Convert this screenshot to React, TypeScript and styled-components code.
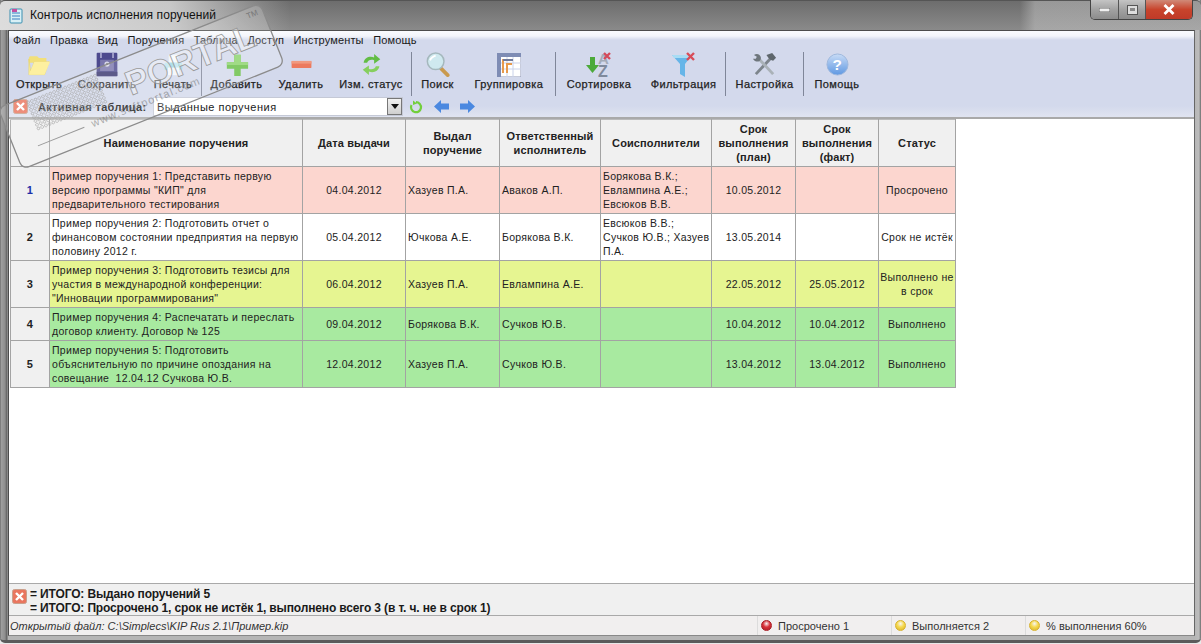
import React from "react";
import styled, { createGlobalStyle } from "styled-components";

const Global = createGlobalStyle`
  html, body { margin: 0; padding: 0; width: 1201px; height: 644px; overflow: hidden; background: #e8e8e8; }
  * { box-sizing: border-box; }
  body { font-family: "Liberation Sans", Arial, sans-serif; color: #1a1a1a; }
`;

const Win = styled.div`
  position: relative; width: 1201px; height: 643px; display: flex; flex-direction: column;
  background: linear-gradient(90deg, #5c5c5c 0, #a0a0a0 1px, #8e8e8e 5px, #5e5e5e 7px, #b5b5b5 8px, #b5b5b5 1194px, #bcbcbc 1199px, #6a6a6a 1201px);
  border-bottom: 3px solid #5b5b5b; border-radius: 0 0 5px 5px;
`;
const TitleBar = styled.div`
  height: 30px; flex: none; display: flex; align-items: flex-start; padding: 7px 0 0 9px; gap: 7px;
  background:
    linear-gradient(90deg, rgba(225,225,225,.95) 0, rgba(215,215,215,.85) 170px, rgba(150,150,150,0) 290px, rgba(0,0,0,0) 1020px, rgba(195,195,195,.5) 1035px),
    linear-gradient(180deg, #6d6d6d 0, #8a8a8a 100%);
  border-top: 1px solid #555; border-radius: 5px 5px 0 0;
`;
const Title = styled.div` font-size: 12px; line-height: 15px; color: #111; letter-spacing: .1px; `;
const WinBtns = styled.div`
  position: absolute; right: 8px; top: 0; display: flex; height: 20px;
  border: 1px solid #444; border-top: 0; border-radius: 0 0 5px 5px; overflow: hidden;
`;
const WinBtn = styled.div<{ $w: number; $close?: boolean }>`
  width: ${p => p.$w}px; display: flex; align-items: center; justify-content: center;
  background: ${p => p.$close ? "linear-gradient(180deg,#d08a78 0,#c8442c 50%,#c03a28 100%)" : "linear-gradient(180deg,#c4c4c4 0,#a2a2a2 50%,#8c8c8c 100%)"};
  & + & { border-left: 1px solid #555; }
`;
const Client = styled.div`
  flex: 1; min-height: 0; margin: 0 6px 4px 8px; border: 1px solid #4c4c4c; border-bottom-color: #888; border-right-color: #666;
  display: flex; flex-direction: column; background: #fff;
`;
const Ribbon = styled.div`
  flex: none; height: 88px; display: flex; flex-direction: column;
  background: linear-gradient(180deg, #fafbfe 0, #f3f5fb 5px, #d3d9ec 9px, #d3d9ec 75px, #dfe3f0 85px);
  border-bottom: 2px solid #a9a9a9;
`;
const Menu = styled.div` height: 19px; flex: none; display: flex; padding: 2px 0 0 4px; gap: 9.5px; font-size: 11px; line-height: 15px; letter-spacing: .14px; `;
const ToolRow = styled.div` height: 46px; flex: none; display: flex; align-items: stretch; `;
const ToolBtn = styled.div<{ $w: number }>`
  width: ${p => p.$w}px; flex: none; display: flex; flex-direction: column; align-items: center;
  font-size: 11px; font-weight: 400; line-height: 13px; color: #222; white-space: nowrap; letter-spacing: .42px;
  -webkit-text-stroke: .25px #222;
`;
const Sep = styled.div` width: 1px; flex: none; margin: 2px 0 0; background: #7f8699; `;
const IconBox = styled.div` height: 29px; margin-bottom: -1px; display: flex; align-items: center; justify-content: center; `;
const FilterRow = styled.div` flex: 1; display: flex; align-items: center; padding-left: 4px; `;
const FilterLabel = styled.div` margin-left: 10px; width: 115px; font-size: 11px; font-weight: 700; letter-spacing: .32px; white-space: nowrap; `;
const Combo = styled.div`
  width: 250px; height: 19px; background: #fff; border: 1px solid #c5c9d6; display: flex; align-items: center;
  font-size: 11px; padding-left: 3px; letter-spacing: .5px;
`;
const ComboText = styled.span` flex: 1; `;
const ComboArrow = styled.div`
  width: 15px; height: 17px; background: linear-gradient(180deg,#f1f1f1,#cfcfcf); border: 1px solid #777;
  display: flex; align-items: center; justify-content: center;
  &::after { content: ""; border: 4px solid transparent; border-top: 5px solid #111; border-bottom: 0; }
`;
const NavIcons = styled.div` margin-left: 6px; display: flex; align-items: center; gap: 11px; `;
const Work = styled.div` flex: 1; min-height: 0; background: #fff; padding-left: 1px; `;
const Grid = styled.table`
  border-collapse: collapse; table-layout: fixed; width: 945px; margin: 0;
  font-size: 10.5px; line-height: 14px; letter-spacing: .3px;
`;
const Head = styled.th`
  height: 47px; background: #f0f0f0; border: 1px solid #a3a3a3; border-top-color: #bbb; font-weight: 700; text-align: center; padding: 0 2px;
  letter-spacing: .12px; font-size: 11px; line-height: 14px; color: #222;
`;
const RowNo = styled.td<{ $blue?: boolean }>`
  background: #f0f0f0; border: 1px solid #a3a3a3; text-align: center; font-weight: 700; font-size: 11px;
  color: ${p => p.$blue ? "#1c2fa8" : "#222"};
`;
const Cell = styled.td<{ $bg: string; $center?: boolean }>`
  background: ${p => p.$bg}; border: 1px solid #a3a3a3; color: #222; white-space: pre-wrap;
  padding: ${p => p.$center ? "0" : "0 0 0 2px"};
  text-align: ${p => p.$center ? "center" : "left"}; vertical-align: middle; overflow: hidden;
`;
const Row = styled.tr<{ $h: number }>` height: ${p => p.$h}px; `;
const Summary = styled.div`
  flex: none; height: 32px; background: #f0f0f0; border-top: 1px solid #a9a9a9; display: flex; padding: 3px 0 0 3px; gap: 3px;
  font-size: 12px; font-weight: 700; line-height: 14px; color: #1a1a1a; letter-spacing: -.14px;
`;
const SummaryIcon = styled.div` margin-top: 2px; `;
const Status = styled.div`
  flex: none; height: 20px; background: #f1efef; border-top: 1px solid #a9a9a9; display: flex; align-items: center;
  font-size: 11px; letter-spacing: .02px; color: #333;
`;
const FilePath = styled.div` flex: 1; font-style: italic; padding-left: 1px; `;
const StatusCell = styled.div<{ $w: number }>`
  width: ${p => p.$w}px; height: 100%; flex: none; display: flex; align-items: center; gap: 6px; padding-left: 3px; border-left: 1px solid #dcdcdc;
`;
const Led = styled.span<{ $c: string; $d: string }>`
  width: 11px; height: 11px; border-radius: 50%;
  background: radial-gradient(circle at 50% 30%, #fff6 0, ${p => p.$c} 45%, ${p => p.$d} 100%);
  border: 1px solid ${p => p.$d};
`;
const Watermark = styled.svg` position: absolute; left: 0; top: 0; pointer-events: none; `;

const CloseX = () => (
  <svg width="15" height="15" viewBox="0 0 15 15">
    <rect x=".5" y=".5" width="14" height="14" rx="2" fill="#e9765f" stroke="#c9a08c" />
    <path d="M4 4l7 7M11 4l-7 7" stroke="#fff" strokeWidth="2.4" />
  </svg>
);
const Folder = () => (
  <svg width="24" height="23" viewBox="0 0 26 24">
    <path d="M2 5l1-2h8l2 2h8v5H2z" fill="#f2e07a" />
    <path d="M2 6v17h17l5-14H8L4 19z" fill="#fbee9a" stroke="#e6d268" strokeWidth=".6" />
    <path d="M8 9h17l-6 14H2z" fill="#fdf0a0" />
  </svg>
);
const Floppy = () => (
  <svg width="24" height="25" viewBox="0 0 26 29">
    <rect x="1" y="1" width="24" height="27" rx="1" fill="#4d4a8e" />
    <rect x="5" y="1" width="2" height="6" fill="#a9a8cf" /><rect x="19" y="1" width="2" height="6" fill="#a9a8cf" />
    <rect x="5" y="9" width="16" height="13" fill="#7a77ad" />
    <circle cx="13" cy="14" r="3" fill="#d8d8e8" /><circle cx="13" cy="14" r="1" fill="#555" />
    <rect x="1" y="23" width="24" height="5" fill="#39366f" />
  </svg>
);
const Printer = () => (
  <svg width="22" height="24" viewBox="0 0 26 28">
    <rect x="8" y="2" width="11" height="10" fill="#f6f9fd" stroke="#dbe4ee" />
    <rect x="3" y="11" width="21" height="9" rx="2" fill="#9fd8e6" />
    <rect x="7" y="17" width="13" height="9" fill="#f2f6fb" />
    <circle cx="20" cy="14" r="1" fill="#5aa" />
  </svg>
);
const Plus = () => (
  <svg width="24" height="24" viewBox="0 0 26 26">
    <path d="M10 2h7v8h8v7h-8v8h-7v-8H2v-7h8z" fill="#67bf45" />
    <path d="M10 2h7v8h8v3H2v-3h8z" fill="#8cd46c" />
  </svg>
);
const Minus = () => (
  <svg width="23" height="9" viewBox="0 0 24 10"><rect x="1" y="1" width="22" height="8" rx="1" fill="#ec7a5e" /><rect x="1" y="1" width="22" height="3" fill="#f09a80" /></svg>
);
const Cycle = () => (
  <svg width="21" height="23" viewBox="0 0 24 26">
    <path d="M3 11C4 5 10 3 15 5V1l7 6-7 5V8c-4-1-7 0-8 3z" fill="#62bd45" />
    <path d="M21 15c-1 6-7 8-12 6v4l-7-6 7-5v4c4 1 7 0 8-3z" fill="#86cf5e" />
  </svg>
);
const Lens = () => (
  <svg width="25" height="25" viewBox="0 0 26 27">
    <path d="M17 18l7 7" stroke="#c99a4e" strokeWidth="4" strokeLinecap="round" />
    <circle cx="11" cy="10" r="9" fill="#cfe9ef" stroke="#a5b8bd" strokeWidth="1.6" />
    <path d="M5 9c1-3 3-4 6-5" stroke="#fff" strokeWidth="2" fill="none" />
  </svg>
);
const GroupIcon = () => (
  <svg width="24" height="24" viewBox="0 0 24 24">
    <rect x="0" y="0" width="24" height="24" fill="#fff" stroke="#8f97b4" />
    <rect x="0" y="0" width="24" height="4" fill="#7e8cb4" /><rect x="0" y="0" width="4" height="24" fill="#7e8cb4" />
    <path d="M10 4v20M16 4v20M4 10h20M4 16h20" stroke="#c9d2ea" />
    <path d="M6 20V7h10M10 20v-9h5" stroke="#e79a4d" strokeWidth="2" fill="none" />
    <path d="M6 7h10" stroke="#707a99" strokeWidth="2" />
  </svg>
);
const SortIcon = () => (
  <svg width="26" height="26" viewBox="0 0 26 26" style={{ overflow: "visible" }}>
    <path d="M4 5h5v8h4l-6.500 8L0 13h4z" fill="#4caa3a" />
    <text x="12" y="12" fontFamily="Liberation Sans" fontWeight="700" fontSize="15" fill="#a3abb8">A</text>
    <text x="12" y="25" fontFamily="Liberation Sans" fontWeight="700" fontSize="16" fill="#7f8a9c">Z</text>
    <path d="M18 1l6 6M24 1l-6 6" stroke="#d44a5a" strokeWidth="2.4" />
  </svg>
);
const Funnel = () => (
  <svg width="26" height="26" viewBox="0 0 26 26">
    <path d="M1 3h20l-7 9v13l-5-3V12z" fill="#66b5e8" />
    <path d="M1 3h20l-2 3H3z" fill="#a8dcf4" />
    <path d="M16 1l7 7M23 1l-7 7" stroke="#d84c58" strokeWidth="2.4" />
  </svg>
);
const Tools = () => (
  <svg width="25" height="25" viewBox="0 0 26 26" fill="none">
    <path d="M4 23L19 7" stroke="#7d858c" strokeWidth="3" />
    <path d="M15 3l6-2 4 5-3 3-3-1-2-2z" fill="#5e666c" />
    <path d="M22 23L8 8" stroke="#aab2b8" strokeWidth="3" />
    <path d="M2 3c3-2 6-1 7 2s-1 5-3 5-4-1-5-3l3 0 1-2z" fill="#6e767c" />
  </svg>
);
const Help = () => (
  <svg width="23" height="23" viewBox="0 0 24 24">
    <defs><linearGradient id="hg" x1="0" y1="0" x2="0" y2="1"><stop offset="0" stopColor="#c9dcf6" /><stop offset="1" stopColor="#5f98e2" /></linearGradient></defs>
    <circle cx="12" cy="12" r="11" fill="url(#hg)" stroke="#9db7dd" />
    <text x="12" y="18" textAnchor="middle" fontFamily="Liberation Sans" fontWeight="700" fontSize="16" fill="#fff">?</text>
  </svg>
);
const Reload = () => (
  <svg width="14" height="14" viewBox="0 0 14 14" fill="none">
    <path d="M7 2.200A5 5 0 1 1 2.500 5" stroke="#72cf3c" strokeWidth="2.200" />
    <path d="M4 .5v4.500l4-1.500z" fill="#72cf3c" />
  </svg>
);
const Arrow = ({ right }: { right?: boolean }) => (
  <svg width="15" height="13" viewBox="0 0 15 13">
    <path d={right ? "M15 6.500L8 0v3.500H0v6h8V13z" : "M0 6.500L7 0v3.500h8v6H7V13z"} fill="#4a88e0" />
  </svg>
);
const DocIcon = () => (
  <svg width="14" height="16" viewBox="0 0 14 16">
    <rect x="1" y="1" width="12" height="14" rx="1" fill="#d8f0f6" stroke="#3a8fb0" />
    <path d="M3 5h8M3 8h8M3 11h8" stroke="#3b7fc0" />
    <path d="M3 1h5v3H3z" fill="#c54fa0" />
  </svg>
);

const tools: ({ label: string; w: number; icon: React.ReactNode } | "sep")[] = [
  { label: "Открыть", w: 60, icon: <Folder /> },
  { label: "Сохранить", w: 76, icon: <Floppy /> },
  { label: "Печать", w: 56, icon: <Printer /> },
  "sep",
  { label: "Добавить", w: 69, icon: <Plus /> },
  { label: "Удалить", w: 60, icon: <Minus /> },
  { label: "Изм. статус", w: 80, icon: <Cycle /> },
  "sep",
  { label: "Поиск", w: 51, icon: <Lens /> },
  { label: "Группировка", w: 92, icon: <GroupIcon /> },
  "sep",
  { label: "Сортировка", w: 86, icon: <SortIcon /> },
  { label: "Фильтрация", w: 83, icon: <Funnel /> },
  "sep",
  { label: "Настройка", w: 77, icon: <Tools /> },
  "sep",
  { label: "Помощь", w: 66, icon: <Help /> },
];

const cols = [39, 253, 103, 94, 101, 111, 84, 83, 77];
const heads = ["", "Наименование поручения", "Дата выдачи", "Выдал поручение", "Ответственный исполнитель", "Соисполнители", "Срок выполнения (план)", "Срок выполнения (факт)", "Статус"];
const PINK = "#fcd6cf", WHITE = "#ffffff", YEL = "#e6f591", GRN = "#a8eaa0";
const rows = [
  { h: 47, bg: PINK, blue: true, c: ["Пример поручения 1: Представить первую версию программы \"КИП\" для предварительного тестирования", "04.04.2012", "Хазуев П.А.", "Аваков А.П.", "Борякова В.К.; Евлампина А.Е.; Евсюков В.В.", "10.05.2012", "", "Просрочено"] },
  { h: 47, bg: WHITE, c: ["Пример поручения 2: Подготовить отчет о финансовом состоянии предприятия на первую половину 2012 г.", "05.04.2012", "Ючкова А.Е.", "Борякова В.К.", "Евсюков В.В.; Сучков Ю.В.; Хазуев П.А.", "13.05.2014", "", "Срок не истёк"] },
  { h: 47, bg: YEL, c: ["Пример поручения 3: Подготовить тезисы для участия в международной конференции: \"Инновации программирования\"", "06.04.2012", "Хазуев П.А.", "Евлампина А.Е.", "", "22.05.2012", "25.05.2012", "Выполнено не в срок"] },
  { h: 33, bg: GRN, c: ["Пример поручения 4: Распечатать и переслать договор клиенту. Договор № 125", "09.04.2012", "Борякова В.К.", "Сучков Ю.В.", "", "10.04.2012", "10.04.2012", "Выполнено"] },
  { h: 47, bg: GRN, c: ["Пример поручения 5: Подготовить объяснительную по причине опоздания на совещание  12.04.12 Сучкова Ю.В.", "12.04.2012", "Хазуев П.А.", "Сучков Ю.В.", "", "13.04.2012", "13.04.2012", "Выполнено"] },
];
const centered = [false, true, false, false, false, true, true, true];

const dots: React.ReactNode[] = [];
for (let i = 0; i < 19; i++) for (let j = 0; j < 8; j++) {
  dots.push(<circle key={`${i}-${j}`} cx={30 + i * 4} cy={6 + j * 4} r="1.400" fill="none" stroke="#a8a8a8" strokeWidth=".6" />);
}

export default function App() {
  return (
    <Win>
      <Global />
      <TitleBar><DocIcon /><Title>Контроль исполнения поручений</Title></TitleBar>
      <WinBtns>
        <WinBtn $w={27}><svg width="11" height="4"><rect width="11" height="4" fill="#f0f0f0" stroke="#666" /></svg></WinBtn>
        <WinBtn $w={27}><svg width="11" height="10"><rect x=".5" y=".5" width="10" height="9" fill="#ddd" stroke="#555" /><rect x="3" y="3" width="5" height="3" fill="#888" /></svg></WinBtn>
        <WinBtn $w={47} $close><svg width="12" height="11"><path d="M1.500 1l9 9M10.500 1l-9 9" stroke="#fff" strokeWidth="2.800" /></svg></WinBtn>
      </WinBtns>
      <Client>
        <Ribbon>
          <Menu>
            {["Файл", "Правка", "Вид", "Поручения", "Таблица", "Доступ", "Инструменты", "Помощь"].map(m => <span key={m}>{m}</span>)}
          </Menu>
          <ToolRow>
            {tools.map((t, i) => t === "sep" ? <Sep key={i} /> : (
              <ToolBtn key={t.label} $w={t.w}><IconBox>{t.icon}</IconBox>{t.label}</ToolBtn>
            ))}
          </ToolRow>
          <FilterRow>
            <CloseX />
            <FilterLabel>Активная таблица:</FilterLabel>
            <Combo><ComboText>Выданные поручения</ComboText><ComboArrow /></Combo>
            <NavIcons><Reload /><Arrow /><Arrow right /></NavIcons>
          </FilterRow>
        </Ribbon>
        <Work>
          <Grid>
            <colgroup>{cols.map((w, i) => <col key={i} style={{ width: w }} />)}</colgroup>
            <thead><tr>{heads.map((h, i) => <Head key={i}>{h}</Head>)}</tr></thead>
            <tbody>
              {rows.map((r, i) => (
                <Row key={i} $h={r.h}>
                  <RowNo $blue={r.blue}>{i + 1}</RowNo>
                  {r.c.map((v, j) => <Cell key={j} $bg={r.bg} $center={centered[j]}>{v}</Cell>)}
                </Row>
              ))}
            </tbody>
          </Grid>
        </Work>
        <Summary>
          <SummaryIcon><CloseX /></SummaryIcon>
          <div>= ИТОГО: Выдано поручений 5<br />= ИТОГО: Просрочено 1, срок не истёк 1, выполнено всего 3 (в т. ч. не в срок 1)</div>
        </Summary>
        <Status>
          <FilePath>Открытый файл: C:\Simplecs\KIP Rus 2.1\Пример.kip</FilePath>
          <StatusCell $w={134}><Led $c="#d9323a" $d="#a81c24" />Просрочено 1</StatusCell>
          <StatusCell $w={134}><Led $c="#f6d94e" $d="#d8b22c" />Выполняется 2</StatusCell>
          <StatusCell $w={169}><Led $c="#f6d94e" $d="#d8b22c" />% выполнения 60%</StatusCell>
        </Status>
      </Client>
      <Watermark width="300" height="175" viewBox="0 0 300 175">
        <g transform="translate(-2 108) rotate(-21.800)">
          <rect x="0" y="0" width="282" height="66" rx="7" fill="rgba(255,255,255,.18)" stroke="#8b8b8b" strokeWidth="1.300" />
          {dots}
          <text x="128" y="38" fontFamily="Liberation Sans" fontWeight="700" fontSize="34" fill="rgba(255,255,255,.35)" stroke="#999" strokeWidth=".8">PORTAL</text>
          <text x="265" y="10" fontFamily="Liberation Sans" fontSize="8" fill="#777">TM</text>
          <text x="81" y="53" fontFamily="Liberation Sans" fontSize="11" letterSpacing="1.200" fill="rgba(110,110,110,.55)">www.softportal.com</text>
          <path d="M23 50h50" stroke="#999" strokeWidth="1" />
        </g>
      </Watermark>
    </Win>
  );
}
